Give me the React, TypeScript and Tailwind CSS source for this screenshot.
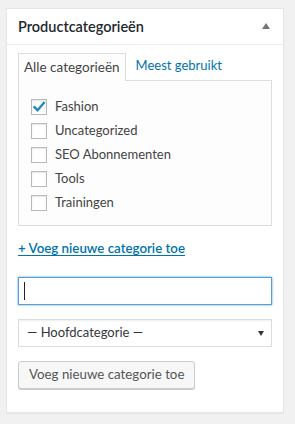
import React from "react";

const font = { fontFamily: "Lato, 'Noto Sans', sans-serif" };

function Check({ checked }: { checked?: boolean }) {
  return (
    <span className="relative flex h-[16px] w-[16px] shrink-0 items-center justify-center border border-[#b4b9be] bg-white shadow-[inset_0_1px_2px_rgba(0,0,0,0.1)]">
      {checked && (
        <svg width="16" height="16" viewBox="0 0 16 16" className="absolute left-[-1px] top-[-1px]">
          <path d="M3.5 8.2 L6.6 11.3 L12.8 4" fill="none" stroke="#1e8cbe" strokeWidth="2.4" strokeLinecap="square" />
        </svg>
      )}
    </span>
  );
}

export default function App() {
  const items = [
    { label: "Fashion", checked: true },
    { label: "Uncategorized" },
    { label: "SEO Abonnementen" },
    { label: "Tools" },
    { label: "Trainingen" },
  ];
  return (
    <div className="min-h-[424px] w-[295px] bg-[#f1f1f1] pl-[6px] pr-[11px] pt-[8px]" style={font}>
      <div className="h-[405px] border border-[#e5e5e5] bg-white shadow-[0_1px_1px_rgba(0,0,0,0.04)]">
        <div className="flex h-[36px] items-center justify-between border-b border-[#eee] pl-[11px] pr-[13px]">
          <h2 className="text-[14.5px] font-semibold text-[#23282d]">Productcategorieën</h2>
          <svg width="8" height="6" viewBox="0 0 8 6" className="mb-[1px]">
            <path d="M0 6 L4 0 L8 6 Z" fill="#72777c" />
          </svg>
        </div>
        <div className="px-[11px] pt-[8px]">
          <div className="flex items-end">
            <div className="relative z-10 mb-[-1px] flex h-[28px] items-center border border-b-0 border-[#ddd] bg-[#fdfdfd] px-[5px] pb-[1px] text-[13.5px] text-[#444]">
              Alle categorieën
            </div>
            <div className="flex h-[27px] items-center px-[10px] pb-[1px] text-[13px] text-[#0073aa]">Meest gebruikt</div>
          </div>
          <div className="border border-[#ddd] bg-[#fdfdfd] pl-[12px] pt-[14px] pb-[10px]">
            {items.map((it) => (
              <div key={it.label} className="flex h-[24px] items-center gap-[8px] text-[13px] text-[#444]">
                <Check checked={it.checked} />
                <span>{it.label}</span>
              </div>
            ))}
          </div>
          <div className="mt-[12px] h-[20px] text-[13.3px] font-semibold leading-[20px] text-[#0073aa] underline underline-offset-[2px]">
            + Voeg nieuwe categorie toe
          </div>
          <div className="mt-[19px] flex h-[28px] items-center border border-[#5b9dd9] bg-white pl-[5px] shadow-[0_0_2px_rgba(30,140,190,0.8)]">
            <span className="h-[18px] w-[1px] bg-[#222]" />
          </div>
          <div className="mt-[14px] flex h-[28px] items-center justify-between border border-[#ddd] bg-white pl-[8px] pr-[7px] text-[13px] text-[#32373c] shadow-[inset_0_1px_2px_rgba(0,0,0,0.07)]">
            <span>— Hoofdcategorie —</span>
            <svg width="6" height="5" viewBox="0 0 6 5">
              <path d="M0 0 L6 0 L3 5 Z" fill="#32373c" />
            </svg>
          </div>
          <div className="mt-[14px] flex">
            <div className="flex h-[28px] items-center rounded-[3px] border border-[#ccc] bg-[#f7f7f7] px-[10px] pb-[1px] text-[13.3px] text-[#555] shadow-[0_1px_0_#ccc]">
              Voeg nieuwe categorie toe
            </div>
          </div>
        </div>
      </div>
    </div>
  );
}
